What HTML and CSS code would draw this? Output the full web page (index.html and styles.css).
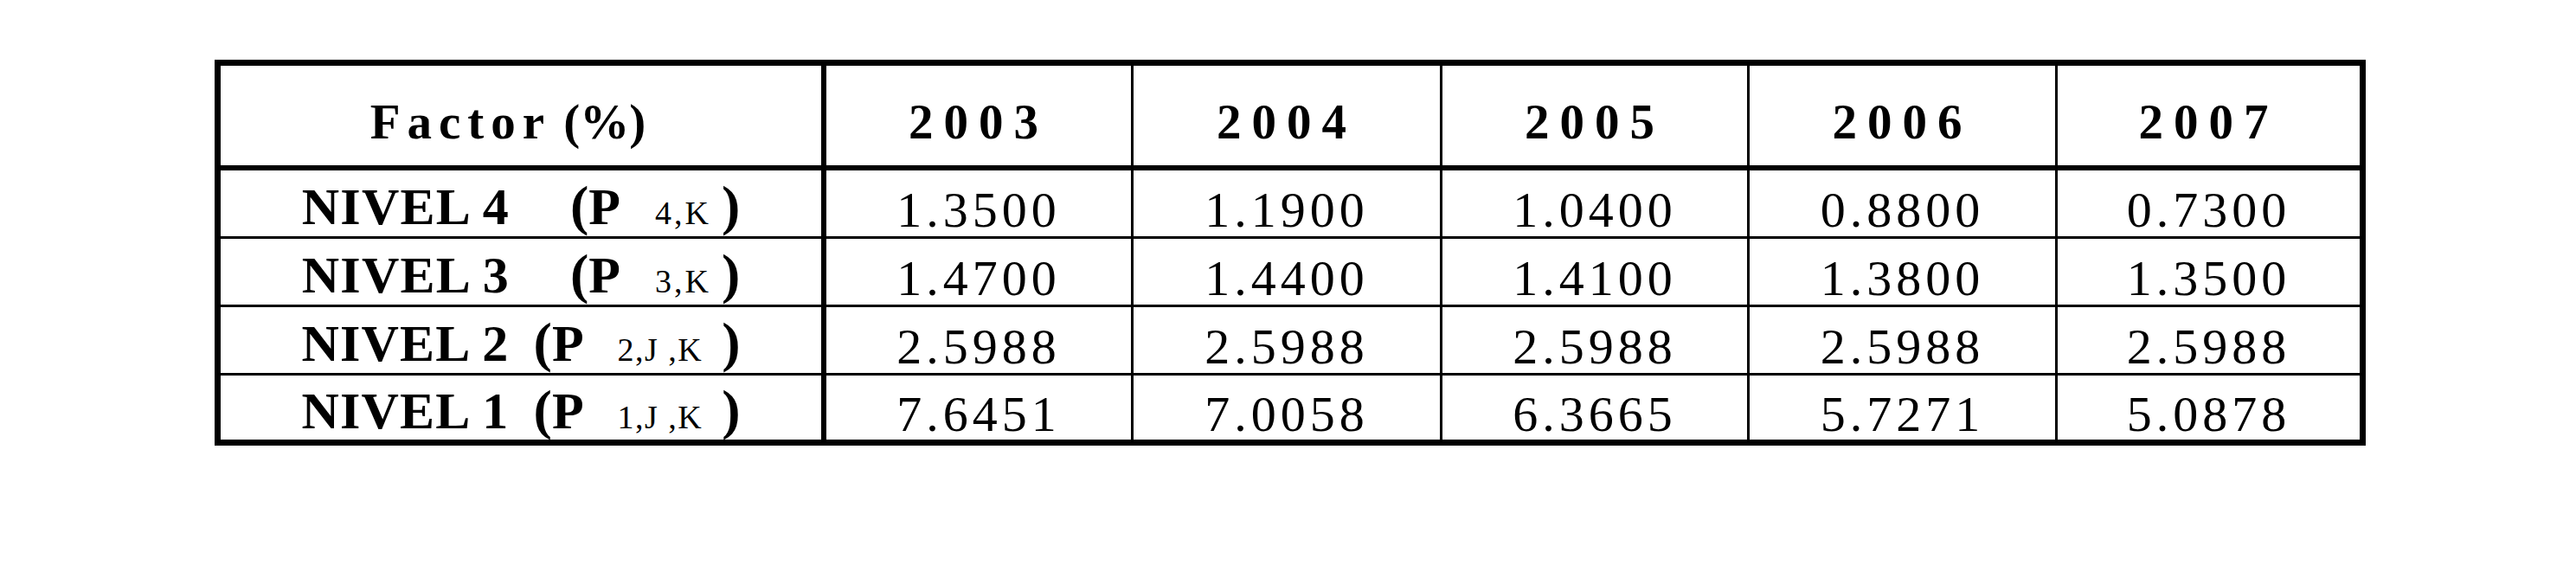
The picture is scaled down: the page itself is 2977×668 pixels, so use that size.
FILE: index.html
```html
<!DOCTYPE html>
<html lang="es">

<head>
    <meta charset="UTF-8">
    <meta name="viewport" content="width=device-width, initial-scale=1.0">
    <title>Factores por nivel</title>
    <link rel="stylesheet" href="styles.css">
</head>

<body>
    <table class="factors">
        <colgroup>
            <col class="c-label">
            <col class="c-2003">
            <col class="c-2004">
            <col class="c-2005">
            <col class="c-2006">
            <col class="c-2007">
        </colgroup>
        <thead>
            <tr>
                <th class="factor"><span class="spaced">Factor</span> (%)</th>
                <th>2003</th>
                <th>2004</th>
                <th>2005</th>
                <th>2006</th>
                <th>2007</th>
            </tr>
        </thead>
        <tbody>
            <tr>
                <td class="lbl"><b class="lvl">NIVEL 4</b><b class="p wide"><span class="paren">(</span>P</b><span class="idx">4,K</span><b class="close paren">)</b></td>
                <td>1.3500</td>
                <td>1.1900</td>
                <td>1.0400</td>
                <td>0.8800</td>
                <td>0.7300</td>
            </tr>
            <tr>
                <td class="lbl"><b class="lvl">NIVEL 3</b><b class="p wide"><span class="paren">(</span>P</b><span class="idx">3,K</span><b class="close paren">)</b></td>
                <td>1.4700</td>
                <td>1.4400</td>
                <td>1.4100</td>
                <td>1.3800</td>
                <td>1.3500</td>
            </tr>
            <tr>
                <td class="lbl"><b class="lvl">NIVEL 2</b><b class="p"><span class="paren">(</span>P</b><span class="idx narrow">2,J ,K</span><b class="close paren far">)</b></td>
                <td>2.5988</td>
                <td>2.5988</td>
                <td>2.5988</td>
                <td>2.5988</td>
                <td>2.5988</td>
            </tr>
            <tr>
                <td class="lbl"><b class="lvl">NIVEL 1</b><b class="p"><span class="paren">(</span>P</b><span class="idx narrow">1,J ,K</span><b class="close paren far">)</b></td>
                <td>7.6451</td>
                <td>7.0058</td>
                <td>6.3665</td>
                <td>5.7271</td>
                <td>5.0878</td>
            </tr>
        </tbody>
    </table>
</body>

</html>
```

FILE: styles.css
```css
* {
    box-sizing: border-box;
}

body {
    margin: 0;
    background-color: white;
    color: black;
    font-family: "Liberation Serif", "Times New Roman", serif;
}

.factors {
    margin: 69px 0 0 248px;
    width: 2486px;
    table-layout: fixed;
    border-collapse: separate;
    border-spacing: 0;
    border: 7px solid black;
    line-height: 1;
}

.c-label { width: 700px; }
.c-2003 { width: 355px; }
.c-2004 { width: 357px; }
.c-2005 { width: 355px; }
.c-2006 { width: 356px; }
.c-2007 { width: 349px; }

.factors th,
.factors td {
    padding: 0;
    text-align: center;
    vertical-align: middle;
    border-right: 3px solid black;
    border-bottom: 3px solid black;
}

.factors th:first-child,
.factors td:first-child {
    border-right-width: 6px;
}

.factors th:last-child,
.factors td:last-child {
    border-right: none;
}

.factors th {
    height: 121px;
    padding-top: 13px;
    border-bottom-width: 6px;
    font-size: 57px;
    font-weight: bold;
    letter-spacing: 12px;
}

.factors th.factor {
    letter-spacing: 0;
    padding-right: 30px;
}

.spaced {
    letter-spacing: 8px;
}

.factors td {
    height: 79px;
    padding-top: 15px;
    font-size: 58px;
    letter-spacing: 5px;
}

.factors tbody tr:last-child td {
    height: 74px;
    border-bottom: none;
}

.factors td.lbl {
    padding-top: 5px;
    font-size: 60px;
    letter-spacing: 0;
}

.lvl {
    letter-spacing: 1.2px;
}

.paren {
    font-size: 64px;
}

.lbl .p {
    margin-left: 28px;
}

.lbl .p.wide {
    margin-left: 70px;
}

.idx {
    margin-left: 40px;
    font-size: 38px;
    letter-spacing: 3px;
}

.idx.narrow {
    margin-left: 39px;
    letter-spacing: 1.5px;
}

.close {
    margin-left: 12px;
}

.close.far {
    margin-left: 22px;
}
```
